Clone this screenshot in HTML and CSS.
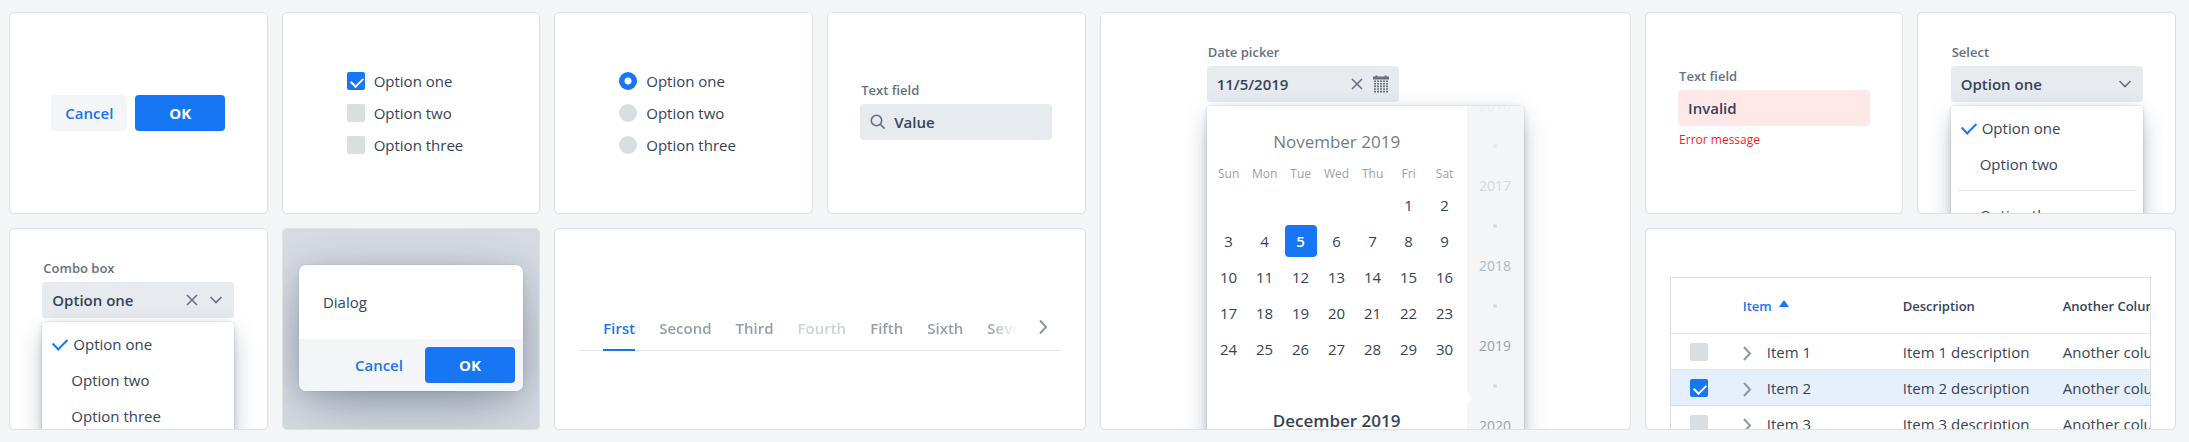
FILE: index.html
```
<!DOCTYPE html>
<html lang="en">
<head>
  <meta charset="UTF-8">
  <meta name="viewport" content="width=device-width, initial-scale=1">
  <title>Components</title>
  <link rel="stylesheet" href="styles.css">
</head>
<body>
  <main class="grid">
    <!-- Buttons -->
    <section class="card center">
      <div class="buttons">
        <button class="btn">Cancel</button>
        <button class="btn primary">OK</button>
      </div>
    </section>

    <!-- Checkboxes -->
    <section class="card center">
      <div class="options">
        <label class="option"><input type="checkbox" class="check" checked> Option one</label>
        <label class="option"><input type="checkbox" class="check"> Option two</label>
        <label class="option"><input type="checkbox" class="check"> Option three</label>
      </div>
    </section>

    <!-- Radio buttons -->
    <section class="card center">
      <div class="options">
        <label class="option"><input type="radio" name="radio" class="radio" checked> Option one</label>
        <label class="option"><input type="radio" name="radio" class="radio"> Option two</label>
        <label class="option"><input type="radio" name="radio" class="radio"> Option three</label>
      </div>
    </section>

    <!-- Text field -->
    <section class="card center">
      <div class="field-group padded">
        <label class="label" for="search">Text field</label>
        <div class="field">
          <svg class="search-icon" width="16" height="16" viewBox="0 0 16 16"><circle cx="6.5" cy="6.5" r="5.2"/><path d="M10.3 10.3L14.6 14.6"/></svg>
          <input id="search" type="text" value="Value">
        </div>
      </div>
    </section>

    <!-- Date picker -->
    <section class="card wide tall top">
      <div class="picker-group">
        <label class="label" for="date">Date picker</label>
        <div class="field">
          <input id="date" type="text" value="11/5/2019">
          <button class="icon-btn" aria-label="Clear"><svg width="16" height="16" viewBox="0 0 16 16"><path d="M3 3L13 13M13 3L3 13"/></svg></button>
          <button class="icon-btn" aria-label="Open calendar">
            <svg class="calendar-icon" width="16" height="18" viewBox="0 0 16 18">
              <path class="solid" d="M0 1.5H2.5V0.5H4.5V1.5H11.5V0.5H13.5V1.5H16V4.5H0Z"/>
              <path class="dots" d="M1 6.2H15M1 8.8H15M1 11.4H15M1 14H15M1 16.6H15"/>
            </svg>
          </button>
        </div>
        <div class="overlay picker">
          <div class="months">
            <table class="month">
              <caption class="past">November 2019</caption>
              <thead>
                <tr><th>Sun</th><th>Mon</th><th>Tue</th><th>Wed</th><th>Thu</th><th>Fri</th><th>Sat</th></tr>
              </thead>
              <tbody>
                <tr><td></td><td></td><td></td><td></td><td></td><td>1</td><td>2</td></tr>
                <tr><td>3</td><td>4</td><td><span class="selected">5</span></td><td>6</td><td>7</td><td>8</td><td>9</td></tr>
                <tr><td>10</td><td>11</td><td>12</td><td>13</td><td>14</td><td>15</td><td>16</td></tr>
                <tr><td>17</td><td>18</td><td>19</td><td>20</td><td>21</td><td>22</td><td>23</td></tr>
                <tr><td>24</td><td>25</td><td>26</td><td>27</td><td>28</td><td>29</td><td>30</td></tr>
              </tbody>
            </table>
            <table class="month">
              <caption>December 2019</caption>
            </table>
          </div>
          <ul class="years">
            <li class="farthest">2016</li>
            <li class="far">2017</li>
            <li class="near">2018</li>
            <li>2019</li>
            <li>2020</li>
          </ul>
        </div>
      </div>
    </section>

    <!-- Invalid text field -->
    <section class="card center">
      <div class="field-group padded">
        <label class="label" for="invalid">Text field</label>
        <div class="field invalid">
          <input id="invalid" type="text" value="Invalid" aria-invalid="true" aria-describedby="error">
        </div>
        <p class="error" id="error">Error message</p>
      </div>
    </section>

    <!-- Select -->
    <section class="card top">
      <div class="field-group">
        <label class="label" for="select">Select</label>
        <div class="field">
          <select id="select">
            <option>Option one</option>
            <option>Option two</option>
            <option>Option three</option>
          </select>
          <svg width="16" height="16" viewBox="0 0 16 16"><path d="M2.5 5L8 10.5L13.5 5"/></svg>
        </div>
        <ul class="overlay list">
          <li class="checked">Option one</li>
          <li>Option two</li>
          <li class="divider"></li>
          <li>Option three</li>
        </ul>
      </div>
    </section>

    <!-- Combo box -->
    <section class="card top">
      <div class="field-group">
        <label class="label" for="combo">Combo box</label>
        <div class="field">
          <input id="combo" type="text" role="combobox" aria-expanded="true" aria-controls="combo-list" value="Option one">
          <button class="icon-btn" aria-label="Clear"><svg width="16" height="16" viewBox="0 0 16 16"><path d="M3 3L13 13M13 3L3 13"/></svg></button>
          <button class="icon-btn" aria-label="Toggle list"><svg width="16" height="16" viewBox="0 0 16 16"><path d="M2.5 5L8 10.5L13.5 5"/></svg></button>
        </div>
        <ul class="overlay list" id="combo-list">
          <li class="checked">Option one</li>
          <li>Option two</li>
          <li>Option three</li>
        </ul>
      </div>
    </section>

    <!-- Dialog -->
    <section class="card center backdrop">
      <div class="dialog" role="dialog" aria-label="Dialog">
        <p class="dialog-text">Dialog</p>
        <div class="dialog-footer">
          <button class="btn">Cancel</button>
          <button class="btn primary">OK</button>
        </div>
      </div>
    </section>

    <!-- Tabs -->
    <section class="card wide center">
      <div class="tabs">
        <div class="tab-list" role="tablist">
          <button class="tab active" role="tab" aria-selected="true">First</button>
          <button class="tab" role="tab">Second</button>
          <button class="tab" role="tab">Third</button>
          <button class="tab" role="tab" disabled>Fourth</button>
          <button class="tab" role="tab">Fifth</button>
          <button class="tab" role="tab">Sixth</button>
          <button class="tab" role="tab">Seventh</button>
        </div>
        <button class="scroll-btn" aria-label="Scroll tabs"><svg width="16" height="16" viewBox="0 0 16 16"><path d="M5 1.5L11 8L5 14.5"/></svg></button>
      </div>
    </section>

    <!-- Grid -->
    <section class="card wide grid-card">
      <div class="table-wrap">
        <table class="data">
          <thead>
            <tr>
              <th class="select-col"></th>
              <th class="sorted">Item <svg width="10" height="7" viewBox="0 0 10 7"><path d="M5 0L10 7H0Z"/></svg></th>
              <th>Description</th>
              <th>Another Column</th>
            </tr>
          </thead>
          <tbody>
            <tr>
              <td class="select-col"><input type="checkbox" class="check" aria-label="Select item 1"></td>
              <td><div class="tree"><svg width="16" height="16" viewBox="0 0 16 16"><path d="M5 3L11 9.5L5 16"/></svg>Item 1</div></td>
              <td>Item 1 description</td>
              <td>Another column</td>
            </tr>
            <tr class="row-selected">
              <td class="select-col"><input type="checkbox" class="check" aria-label="Select item 2" checked></td>
              <td><div class="tree"><svg width="16" height="16" viewBox="0 0 16 16"><path d="M5 3L11 9.5L5 16"/></svg>Item 2</div></td>
              <td>Item 2 description</td>
              <td>Another column</td>
            </tr>
            <tr>
              <td class="select-col"><input type="checkbox" class="check" aria-label="Select item 3"></td>
              <td><div class="tree"><svg width="16" height="16" viewBox="0 0 16 16"><path d="M5 3L11 9.5L5 16"/></svg>Item 3</div></td>
              <td>Item 3 description</td>
              <td>Another column</td>
            </tr>
          </tbody>
        </table>
      </div>
    </section>
  </main>
</body>
</html>
```
FILE: styles.css
```
* {
  box-sizing: border-box;
}

body {
  margin: 0;
  background: #f3f5f7;
  color: #35435a;
  font-family: "Open Sans", "Noto Sans", sans-serif;
  font-size: 15px;
  line-height: 20px;
}

button,
input,
select {
  font: inherit;
  color: inherit;
  margin: 0;
}

button {
  border: 0;
  padding: 0;
  background: none;
  cursor: pointer;
}

ul {
  list-style: none;
  margin: 0;
  padding: 0;
}

svg {
  fill: none;
  stroke: currentColor;
  stroke-width: 1.6;
  flex: none;
  overflow: visible;
}

.grid {
  display: grid;
  grid-template-columns: repeat(8, minmax(0, 1fr));
  grid-auto-rows: 202px;
  gap: 14px;
  padding: 12px 13px 12px 9px;
}

.card {
  background: #fff;
  border: 1px solid #dce1e7;
  border-radius: 5px;
  overflow: hidden;
}

.wide {
  grid-column: span 2;
}

.tall {
  grid-row: span 2;
}

.center {
  display: flex;
  align-items: center;
  justify-content: center;
}

.top {
  display: flex;
  align-items: flex-start;
  justify-content: center;
  padding-top: 29px;
}

/* Buttons */
.buttons {
  display: flex;
  gap: 8px;
}

.btn {
  height: 36px;
  min-width: 76px;
  border-radius: 4px;
  background: #f3f5f7;
  color: #1676f3;
  font-weight: 600;
}

.primary {
  min-width: 90px;
  background: #1676f3;
  color: #fff;
  font-weight: 700;
}

/* Checkboxes and radio buttons */
.options {
  display: flex;
  flex-direction: column;
  gap: 12px;
  padding-right: 12px;
}

.option {
  display: flex;
  align-items: center;
  gap: 9px;
}

.check,
.radio {
  appearance: none;
  display: block;
  width: 18px;
  height: 18px;
  background: #dadee3;
  border-radius: 2px;
}

.radio {
  border-radius: 50%;
}

.check:checked {
  background: #1676f3;
}

.check:checked::after {
  content: "";
  display: block;
  width: 10px;
  height: 6px;
  margin: 5px 4px;
  border: solid #fff;
  border-width: 0 0 2px 2px;
  transform: rotate(-45deg);
}

.radio:checked {
  background: radial-gradient(circle, #fff 3px, #1676f3 4px);
}

/* Fields */
.field-group {
  width: 192px;
}

.padded {
  padding-bottom: 6px;
}

.label {
  display: block;
  margin-bottom: 4px;
  padding-left: 1px;
  color: #657183;
  font-size: 13px;
  font-weight: 600;
}

.field {
  display: flex;
  align-items: center;
  gap: 8px;
  width: 192px;
  height: 36px;
  padding: 0 10px;
  border-radius: 4px;
  background: #e7eaef;
}

.field svg {
  color: #657183;
}

.field input,
.field select {
  flex: 1;
  min-width: 0;
  padding: 0;
  border: 0;
  outline: 0;
  background: none;
  appearance: none;
  font-weight: 600;
}

.icon-btn {
  display: flex;
}

.calendar-icon .solid {
  fill: currentColor;
  stroke: none;
}

.calendar-icon .dots {
  stroke-dasharray: 2 1;
}

.invalid {
  background: #ffe9e8;
}

.error {
  margin: 4px 0 0;
  padding: 0 0 4px 1px;
  color: #f01f1b;
  font-size: 12px;
}

/* Overlays */
.overlay {
  margin-top: 4px;
  border-radius: 4px;
  background: #fff;
  box-shadow: 0 0 0 1px rgba(28, 52, 84, .05), 0 2px 6px -1px rgba(28, 52, 84, .2), 0 8px 24px -4px rgba(28, 52, 84, .4);
}

.list {
  padding: 4px 6px;
}

.list li {
  display: flex;
  align-items: center;
  height: 36px;
  padding-left: 23px;
}

.list .checked {
  padding-left: 5px;
}

.checked::before {
  content: "";
  width: 12px;
  height: 7px;
  margin: 0 6px 4px 0;
  border: solid #1676f3;
  border-width: 0 0 2px 2px;
  transform: rotate(-45deg);
}

.list .divider {
  height: 1px;
  margin: 8px 0 6px;
  background: #e5e8ec;
}

/* Date picker */
.picker {
  display: flex;
  width: 317px;
}

.months {
  width: 260px;
  padding: 0 4px;
}

.month {
  width: 100%;
  margin-bottom: 18px;
  border-collapse: collapse;
  table-layout: fixed;
  text-align: center;
}

.month caption {
  padding: 24px 0 8px;
  font-size: 17px;
  line-height: 24px;
  font-weight: 600;
}

.month .past {
  color: #737c89;
  font-weight: 400;
}

.month th {
  height: 24px;
  padding: 0;
  color: #99a1ad;
  font-size: 12px;
  font-weight: 400;
}

.month thead::after {
  content: "";
  display: block;
  height: 1px;
}

.month td {
  height: 36px;
  padding: 0;
}

.selected {
  display: block;
  margin: 0 2px;
  border-radius: 4px;
  background: #1676f3;
  color: #fff;
  font-weight: 600;
  line-height: 32px;
}

.years {
  position: relative;
  flex: 1;
  height: 336px;
  border-radius: 0 4px 0 0;
  overflow: hidden;
  background: #f3f5f7;
  color: #98a0ac;
  font-size: 14px;
  text-align: center;
}

.years li {
  height: 80px;
}

.years li:first-child {
  margin-top: -10px;
}

.years li::after {
  content: "";
  display: block;
  width: 4px;
  height: 4px;
  margin: 28px auto;
  border-radius: 50%;
  background: #d5d9de;
}

.years .near {
  color: #b1b7c0;
}

.years .far {
  color: #d3d7dc;
}

.years .farthest {
  color: #edeff2;
}

.years .farthest::after {
  background: #e7eaed;
}

.years::before {
  content: "";
  position: absolute;
  top: 286px;
  left: 0;
  border: 6px solid transparent;
  border-left-color: #fff;
}

/* Dialog */
.backdrop {
  background: #d7dce2;
}

.dialog {
  width: 224px;
  margin-bottom: 2px;
  border-radius: 7px;
  overflow: hidden;
  background: #fff;
  box-shadow: 0 0 0 1px rgba(28, 52, 84, .05), 0 4px 24px -3px rgba(28, 52, 84, .2), 0 18px 64px -8px rgba(28, 52, 84, .4);
}

.dialog-text {
  margin: 0;
  padding: 27px 24px;
}

.dialog-footer {
  display: flex;
  justify-content: flex-end;
  gap: 8px;
  padding: 8px;
  background: #f3f5f7;
}

/* Tabs */
.tabs {
  display: flex;
  flex: 1;
  min-width: 0;
  height: 44px;
  margin: 0 24px;
  border-bottom: 1px solid #e5e8ec;
}

.tab-list {
  display: flex;
  flex: 1;
  min-width: 0;
  height: 44px;
  gap: 24px;
  padding-left: 24px;
  overflow: hidden;
  mask-image: linear-gradient(to left, transparent 8px, #000 36px);
}

.tab {
  border-bottom: 2px solid transparent;
  color: #949eab;
  font-weight: 600;
}

.tab:disabled {
  color: #ced3d9;
}

.active {
  border-color: #1676f3;
  color: #1676f3;
}

.scroll-btn {
  width: 36px;
  color: #8d97a5;
}

.scroll-btn svg,
.tree svg {
  stroke-width: 2;
}

/* Grid */
.grid-card {
  padding: 48px 24px 0;
}

.table-wrap {
  border: 1px solid #d9dde3;
  overflow: hidden;
}

.data {
  width: 536px;
  border-collapse: separate;
  border-spacing: 0;
  table-layout: fixed;
}

.data th,
.data td {
  height: 36px;
  padding: 0 16px;
  border-bottom: 1px solid #e5e8ec;
  text-align: left;
  white-space: nowrap;
}

.data th {
  height: 56px;
  font-size: 13px;
  font-weight: 600;
}

.data .select-col {
  width: 56px;
  padding: 0 19px;
}

.data .sorted {
  color: #1676f3;
}

.sorted svg {
  margin: 0 0 4px 4px;
  fill: currentColor;
  stroke: none;
}

.tree {
  display: flex;
  align-items: center;
  gap: 12px;
}

.tree svg {
  margin-left: -4px;
  color: #8d97a5;
}

.row-selected td {
  background: #e6f0fd;
  border-color: #cbdcf1;
}
```
